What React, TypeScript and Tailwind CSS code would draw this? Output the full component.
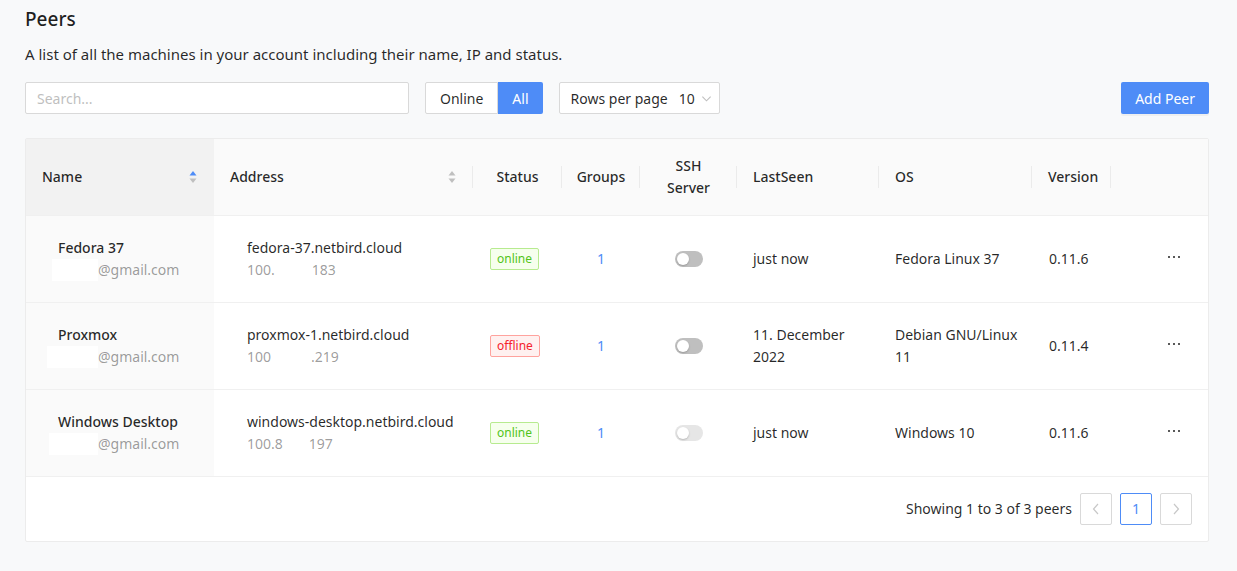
import React from "react";

const F = { fontFamily: '"Noto Sans", "Open Sans", Arial, sans-serif' };

function SortIcon({ active }: { active?: boolean }) {
  return (
    <svg width="8" height="14" viewBox="0 0 8 14">
      <path d="M4 1 L7.5 5.5 L0.5 5.5 Z" fill={active ? "#4e8cf7" : "#bfbfbf"} />
      <path d="M4 13 L7.5 8.5 L0.5 8.5 Z" fill="#bfbfbf" />
    </svg>
  );
}

function Toggle({ disabled }: { disabled?: boolean }) {
  return (
    <div
      className={`relative mx-auto h-[16px] w-[28px] rounded-full ${disabled ? "bg-[#e6e6e6]" : "bg-[#bfbfbf]"}`}
    >
      <div className="absolute left-[2px] top-[2px] h-[12px] w-[12px] rounded-full bg-white shadow-[0_1px_2px_rgba(0,0,0,0.2)]" />
    </div>
  );
}

function Badge({ online }: { online: boolean }) {
  return online ? (
    <span className="inline-block rounded-[2px] border border-[#b7eb8f] bg-[#f6ffed] px-[6px] text-[12px] leading-[20px] text-[#52c41a]">
      online
    </span>
  ) : (
    <span className="inline-block rounded-[2px] border border-[#ffa39e] bg-[#fff1f0] px-[6px] text-[12px] leading-[20px] text-[#f5222d]">
      offline
    </span>
  );
}

function Dots() {
  return (
    <svg width="14" height="4" viewBox="0 0 14 4" className="block">
      <rect x="0" y="1" width="2" height="2" fill="#595959" />
      <rect x="5" y="1" width="2" height="2" fill="#595959" />
      <rect x="10" y="1" width="2" height="2" fill="#595959" />
    </svg>
  );
}

const rows = [
  {
    name: "Fedora 37",
    mask: 46,
    dns: "fedora-37.netbird.cloud",
    ipA: "100.",
    ipGap: 37,
    ipB: "183",
    online: true,
    ssh: false,
    last: ["just now"],
    os: ["Fedora Linux 37"],
    ver: "0.11.6",
  },
  {
    name: "Proxmox",
    mask: 51,
    dns: "proxmox-1.netbird.cloud",
    ipA: "100",
    ipGap: 40,
    ipB: ".219",
    online: false,
    ssh: false,
    last: ["11. December", "2022"],
    os: ["Debian GNU/Linux", "11"],
    ver: "0.11.4",
  },
  {
    name: "Windows Desktop",
    mask: 49,
    dns: "windows-desktop.netbird.cloud",
    ipA: "100.8",
    ipGap: 26,
    ipB: "197",
    online: true,
    ssh: true,
    last: ["just now"],
    os: ["Windows 10"],
    ver: "0.11.6",
  },
];

function Sep() {
  return <span className="absolute right-0 top-1/2 h-[22px] w-px -translate-y-1/2 bg-[#ebebeb]" />;
}

export default function App() {
  return (
    <div style={F} className="min-h-[571px] w-full bg-[#f8f9fa] px-[25px] pt-[6px] text-[14px] text-[rgba(0,0,0,0.85)]">
      <h1 className="text-[19px] font-medium leading-[26px] text-[rgba(0,0,0,0.88)]">Peers</h1>
      <p className="mt-[11px] text-[15px] leading-[22px] text-[rgba(0,0,0,0.85)]">
        A list of all the machines in your account including their name, IP and status.
      </p>

      <div className="mt-[17px] flex items-center">
        <div className="flex h-[32px] w-[384px] items-center rounded-[2px] border border-[#d9d9d9] bg-white px-[11px] text-[14px] text-[#bfbfbf]">
          Search...
        </div>
        <div className="ml-[16px] flex h-[32px]">
          <div className="flex items-center rounded-l-[2px] border border-[#d9d9d9] bg-white px-[14px] text-[rgba(0,0,0,0.85)]">
            Online
          </div>
          <div className="flex items-center rounded-r-[2px] bg-[#4e8cf7] px-[14px] text-white">All</div>
        </div>
        <div className="ml-[16px] flex h-[32px] w-[161px] items-center rounded-[2px] border border-[#d9d9d9] bg-white pl-[11px] text-[rgba(0,0,0,0.85)]">
          <span>Rows per page</span>
          <span className="ml-[11px]">10</span>
          <svg className="ml-[6px]" width="11" height="11" viewBox="0 0 12 12">
            <path d="M1.5 4 L6 8.5 L10.5 4" fill="none" stroke="#bfbfbf" strokeWidth="1.2" />
          </svg>
        </div>
        <div className="ml-auto mr-[3px] flex h-[32px] items-center rounded-[2px] bg-[#4e8cf7] px-[14px] text-[14px] text-white shadow-[0_2px_0_rgba(0,0,0,0.04)]">
          Add Peer
        </div>
      </div>

      <div className="mt-[24px] w-[1184px] rounded-[2px] border border-[#ececec] bg-white">
        <table className="w-full table-fixed border-collapse">
          <colgroup>
            <col style={{ width: 188 }} />
            <col style={{ width: 259 }} />
            <col style={{ width: 89 }} />
            <col style={{ width: 78 }} />
            <col style={{ width: 97 }} />
            <col style={{ width: 142 }} />
            <col style={{ width: 153 }} />
            <col style={{ width: 79 }} />
            <col style={{ width: 97 }} />
          </colgroup>
          <thead>
            <tr className="h-[76px] border-b border-[#f0f0f0] bg-[#fafafa] text-left font-medium">
              <th className="relative bg-[#f2f2f2] px-[16px] font-medium">
                <div className="flex items-center justify-between pr-[1px]">
                  <span>Name</span>
                  <SortIcon active />
                </div>
              </th>
              <th className="relative px-[16px] font-medium">
                <div className="flex items-center justify-between pr-[1px]">
                  <span>Address</span>
                  <SortIcon />
                </div>
                <Sep />
              </th>
              <th className="relative px-[8px] text-center font-medium">
                Status
                <Sep />
              </th>
              <th className="relative px-[8px] text-center font-medium">
                Groups
                <Sep />
              </th>
              <th className="relative px-[8px] text-center font-medium leading-[22px]">
                SSH
                <br />
                Server
                <Sep />
              </th>
              <th className="relative px-[16px] font-medium">
                LastSeen
                <Sep />
              </th>
              <th className="relative px-[16px] font-medium">
                OS
                <Sep />
              </th>
              <th className="relative px-[16px] font-medium">
                Version
                <Sep />
              </th>
              <th></th>
            </tr>
          </thead>
          <tbody>
            {rows.map((r) => (
              <tr key={r.name} className="h-[87px] border-b border-[#f0f0f0]">
                <td className="bg-[#fafafa] pl-[32px]">
                  <div className="font-medium leading-[22px]">{r.name}</div>
                  <div className="flex leading-[22px] text-[rgba(0,0,0,0.4)]">
                    <span className="inline-block h-[22px] bg-white" style={{ width: r.mask, marginLeft: 52 - r.mask - 6 + 6 - 32 + 20 }} />
                    <span>@gmail.com</span>
                  </div>
                </td>
                <td className="pl-[33px]">
                  <div className="leading-[22px]">{r.dns}</div>
                  <div className="leading-[22px] text-[rgba(0,0,0,0.4)]">
                    <span>{r.ipA}</span>
                    <span className="inline-block" style={{ width: r.ipGap }} />
                    <span>{r.ipB}</span>
                  </div>
                </td>
                <td className="pl-[17px]">
                  <Badge online={r.online} />
                </td>
                <td className="text-center text-[#4e8cf7]">1</td>
                <td>
                  <Toggle disabled={r.ssh} />
                </td>
                <td className="pl-[16px] leading-[22px]">
                  {r.last.map((l) => (
                    <div key={l}>{l}</div>
                  ))}
                </td>
                <td className="pl-[16px] leading-[22px]">
                  {r.os.map((l) => (
                    <div key={l}>{l}</div>
                  ))}
                </td>
                <td className="pl-[17px]">{r.ver}</td>
                <td className="pl-[57px]">
                  <div className="relative -top-[2px]">
                    <Dots />
                  </div>
                </td>
              </tr>
            ))}
          </tbody>
        </table>
        <div className="flex h-[64px] items-center justify-end pr-[16px]">
          <span className="mr-[8px]">Showing 1 to 3 of 3 peers</span>
          <div className="flex h-[32px] w-[32px] items-center justify-center rounded-[2px] border border-[#d9d9d9] bg-white">
            <svg width="10" height="12" viewBox="0 0 10 12">
              <path d="M7 1 L2.5 6 L7 11" fill="none" stroke="#c8c8c8" strokeWidth="1.2" />
            </svg>
          </div>
          <div className="ml-[8px] flex h-[32px] w-[32px] items-center justify-center rounded-[2px] border border-[#4e8cf7] bg-white text-[#4e8cf7]">
            1
          </div>
          <div className="ml-[8px] flex h-[32px] w-[32px] items-center justify-center rounded-[2px] border border-[#d9d9d9] bg-white">
            <svg width="10" height="12" viewBox="0 0 10 12">
              <path d="M3 1 L7.5 6 L3 11" fill="none" stroke="#c8c8c8" strokeWidth="1.2" />
            </svg>
          </div>
        </div>
      </div>
    </div>
  );
}
